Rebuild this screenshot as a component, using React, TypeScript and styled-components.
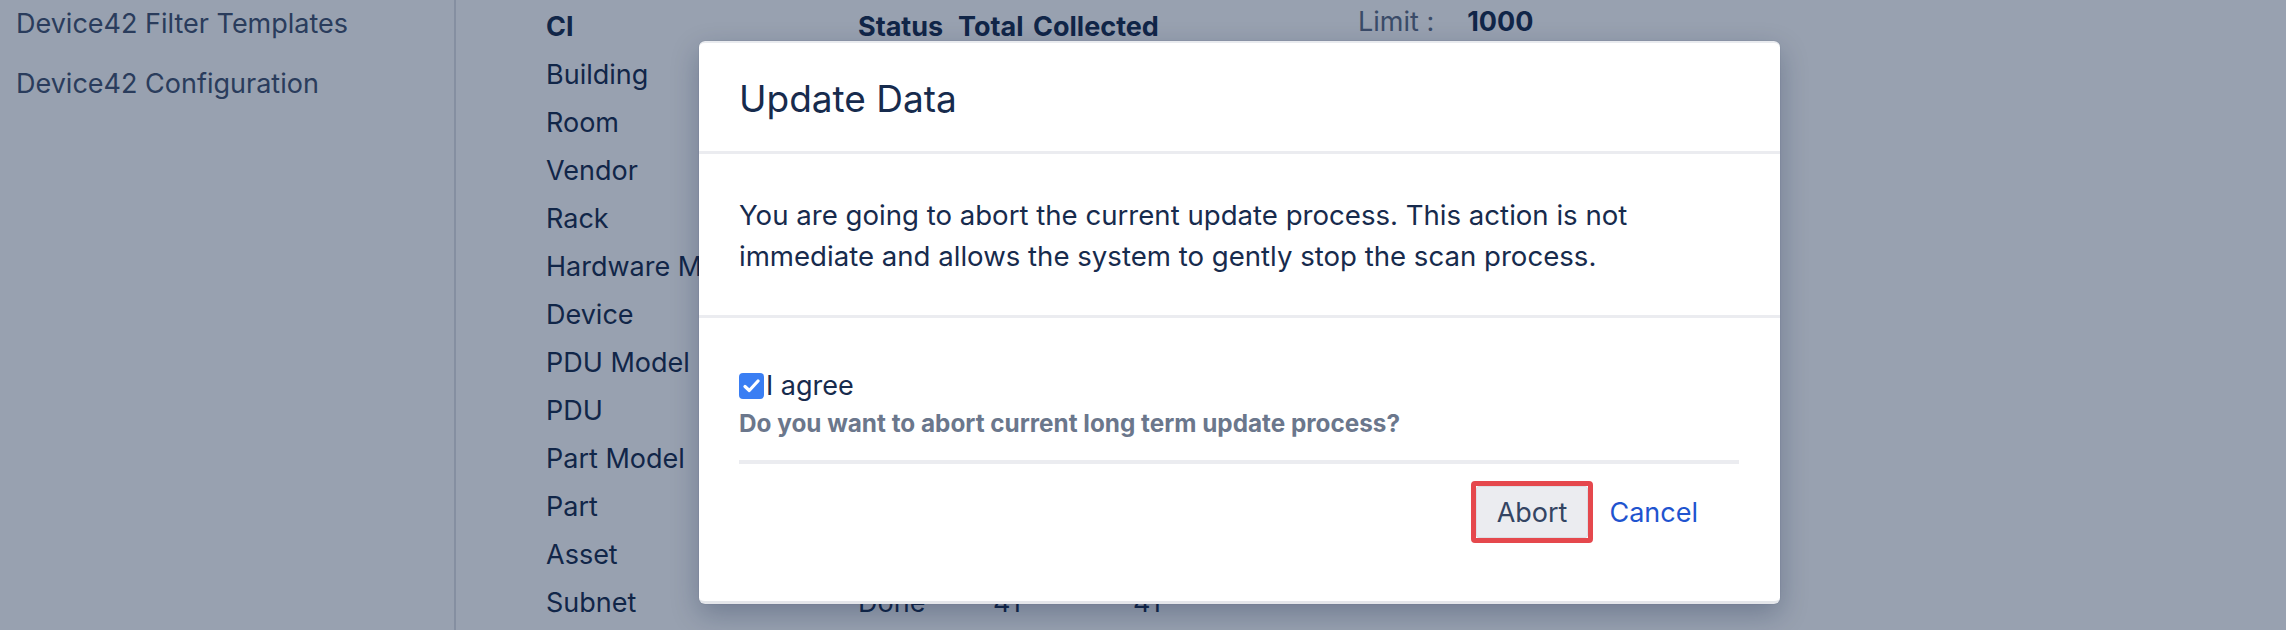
import React from 'react';
import styled, { createGlobalStyle } from 'styled-components';

const GlobalStyle = createGlobalStyle`
  html, body { margin: 0; padding: 0; background: #ffffff; }
  body { font-family: Inter, "Noto Sans", sans-serif; color: #172b4d; }
  *, *::before, *::after { box-sizing: border-box; }
`;

const Page = styled.div`
  position: relative;
  display: flex;
  width: 2286px;
  height: 630px;
  overflow: hidden;
  background: #ffffff;
`;

const Sidebar = styled.nav`
  flex: none;
  width: 456px;
  border-right: 2px solid #dfe1e6;
  padding: 3px 16px 0;
  display: flex;
  flex-direction: column;
  gap: 19px;
`;

const NavItem = styled.div`
  font-size: 27px;
  line-height: 41px;
  color: #42526e;
  white-space: nowrap;
`;

const Main = styled.main`
  flex: 1;
  display: flex;
  align-items: flex-start;
  gap: 197px;
  padding: 3px 0 0 90px;
`;

const Table = styled.div`
  display: grid;
  grid-template-columns: 300px 88px 63px 128px;
  column-gap: 12px;
  grid-auto-rows: 48px;
  font-size: 27px;
  line-height: 48px;
  color: #172b4d;
`;

const Cell = styled.div<{ $num?: boolean; $head?: boolean }>`
  white-space: nowrap;
  font-weight: ${(p) => (p.$head ? 700 : 400)};
  justify-self: ${(p) => (p.$num ? 'end' : 'start')};
`;

const LimitBox = styled.div`
  display: flex;
  gap: 33px;
  font-size: 27px;
  line-height: 41px;
  margin-top: -2px;
  white-space: nowrap;
`;

const LimitLabel = styled.span`
  color: #5e6c84;
`;

const LimitValue = styled.span`
  font-weight: 700;
  color: #172b4d;
`;

const Blanket = styled.div`
  position: absolute;
  inset: 0;
  background: rgba(9, 30, 66, 0.42);
  padding: 41px 0 0 699px;
`;

const Dialog = styled.section`
  width: 1081px;
  background: #ffffff;
  border-radius: 6px;
  border-top: 2px solid #e9ebef;
  border-bottom: 3px solid #e4e6ea;
  box-shadow: 0 0 1px rgba(9, 30, 66, 0.31), 0 10px 28px rgba(9, 30, 66, 0.28);
  display: flex;
  flex-direction: column;
`;

const Header = styled.header`
  padding: 34px 40px 30px;
  border-bottom: 3px solid #ebecf0;
`;

const Title = styled.h1`
  margin: 0;
  font-size: 37px;
  line-height: 44px;
  font-weight: 400;
  color: #172b4d;
`;

const Body = styled.div`
  padding: 41px 41px 38px 40px;
  border-bottom: 3px solid #ebecf0;
`;

const Message = styled.p`
  margin: 0;
  font-size: 27.6px;
  line-height: 41px;
  color: #172b4d;
`;

const Form = styled.div`
  padding: 53px 41px 58px 40px;
  display: flex;
  flex-direction: column;
`;

const CheckRow = styled.label`
  display: flex;
  align-items: center;
  height: 30px;
  font-size: 27px;
  line-height: 30px;
  color: #172b4d;
`;

const CheckBox = styled.span`
  width: 25px;
  height: 26px;
  border-radius: 4px;
  background: #3a7ef3;
  display: inline-flex;
  align-items: center;
  justify-content: center;
  margin-right: 2px;
`;

const Help = styled.div`
  margin-top: 7px;
  font-size: 24.3px;
  line-height: 30px;
  font-weight: 700;
  color: #6b778c;
`;

const Rule = styled.hr`
  margin: 22px 0 0;
  border: none;
  height: 4px;
  background: #ebecf0;
`;

const Actions = styled.div`
  margin-top: 17px;
  display: flex;
  justify-content: flex-end;
  align-items: center;
  gap: 2px;
  padding-right: 27px;
`;

const Highlight = styled.span`
  display: inline-flex;
  border: 5px solid #e5484d;
  border-radius: 4px;
`;

const Button = styled.button<{ $link?: boolean }>`
  font-family: inherit;
  font-size: 27px;
  height: 52px;
  padding: 0 ${(p) => (p.$link ? '14px' : '20px')};
  border-radius: 3px;
  border: ${(p) => (p.$link ? 'none' : '1px solid #dcdfe4')};
  background: ${(p) => (p.$link ? 'transparent' : '#ebecf0')};
  color: ${(p) => (p.$link ? '#1f54cf' : '#344563')};
  cursor: pointer;
`;

type Row = { ci: string; status?: string; total?: string; collected?: string };

const rows: Row[] = [
  { ci: 'Building' },
  { ci: 'Room' },
  { ci: 'Vendor' },
  { ci: 'Rack' },
  { ci: 'Hardware Model' },
  { ci: 'Device' },
  { ci: 'PDU Model' },
  { ci: 'PDU' },
  { ci: 'Part Model' },
  { ci: 'Part' },
  { ci: 'Asset' },
  { ci: 'Subnet', status: 'Done', total: '41', collected: '41' },
];

export default function App() {
  return (
    <>
      <GlobalStyle />
      <Page>
        <Sidebar>
          <NavItem>Device42 Filter Templates</NavItem>
          <NavItem>Device42 Configuration</NavItem>
        </Sidebar>
        <Main>
          <Table>
            <Cell $head>CI</Cell>
            <Cell $head>Status</Cell>
            <Cell $head>Total</Cell>
            <Cell $head>Collected</Cell>
            {rows.map((r) => (
              <React.Fragment key={r.ci}>
                <Cell>{r.ci}</Cell>
                <Cell>{r.status}</Cell>
                <Cell $num>{r.total}</Cell>
                <Cell $num>{r.collected}</Cell>
              </React.Fragment>
            ))}
          </Table>
          <LimitBox>
            <LimitLabel>Limit :</LimitLabel>
            <LimitValue>1000</LimitValue>
          </LimitBox>
        </Main>
        <Blanket>
          <Dialog>
            <Header>
              <Title>Update Data</Title>
            </Header>
            <Body>
              <Message>
                You are going to abort the current update process. This action is not
                <br />
                immediate and allows the system to gently stop the scan process.
              </Message>
            </Body>
            <Form>
              <CheckRow>
                <CheckBox>
                  <svg width="17" height="14" viewBox="0 0 17 14" fill="none">
                    <path d="M2 7.5L6.3 11.5L15 2" stroke="#ffffff" strokeWidth="3.2" strokeLinecap="round" strokeLinejoin="round" />
                  </svg>
                </CheckBox>
                I agree
              </CheckRow>
              <Help>Do you want to abort current long term update process?</Help>
              <Rule />
              <Actions>
                <Highlight>
                  <Button>Abort</Button>
                </Highlight>
                <Button $link>Cancel</Button>
              </Actions>
            </Form>
          </Dialog>
        </Blanket>
      </Page>
    </>
  );
}
